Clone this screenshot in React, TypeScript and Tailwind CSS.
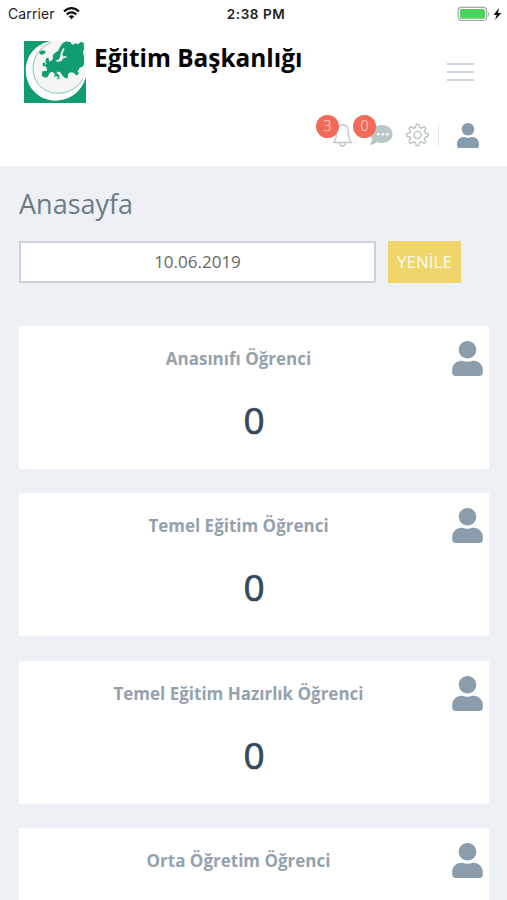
import React from 'react';
import { FaUser } from 'react-icons/fa';
import { SlSettings } from 'react-icons/sl';

const cards: { label: string; value?: number }[] = [
    { label: 'Anasınıfı Öğrenci', value: 0 },
    { label: 'Temel Eğitim Öğrenci', value: 0 },
    { label: 'Temel Eğitim Hazırlık Öğrenci', value: 0 },
    { label: 'Orta Öğretim Öğrenci' },
];

// Crescent around a map of Europe
const Logo: React.FC = () => (
    <svg className="h-[62px] w-[62px] shrink-0" viewBox="0 0 185 185">
        <rect width="185" height="185" fill="#119c72" />
        <path d="M80 0C34 9 5 45 5 88C6 140 46 178 94 178C139 178 173 149 185 107V0Z" fill="#fff" />
        <path d="M88 0C48 13 27 46 27 82C27 126 60 156 101 156C143 156 172 132 185 94V0Z" fill="#f4f5f4" />
        <path d="M80 5C46 18 27 48 27 82C27 126 60 156 101 156C135 156 163 138 176 112" fill="none" stroke="#4dab8b" strokeWidth="2" />
        <g fill="#119c72">
            <path d="M46 32l6-4 9 0 4 5-5 6-8 2-6-4z" />
            <path d="M86 56l0-14 8-8 8-5 6-12 7-10 12-6 12 3 5 8 10-5 7 3 8-7 9 2 1 18-3 12 3 12 0 22-4 8-8 2-7 11 4 8-8 5-8-8-10-2-7 6 0 10-5 3-10-7-7-11-8-3-4 4 9 9-1 8-10-9-6-8-8-3-6 6-5 10-10 1-7-6 2-13 14-1-2-10-6-6 12-4 7-10 8-5 4-7z" />
            <path d="M66 52l6-3 3 9 5 10-4 6-12 1 3-8-3-6z" />
            <path d="M56 66l7-2 1 9-8 3z" />
            <path d="M90 100l3-1 2 8-4 1zM96 111l9 0-3 4z" />
        </g>
        <path d="M110 34l7-13 4 2-6 15 1 8 11-1-1 4-10 3-4 8-12 3-6-5 9-2 5-8z" fill="#f4f5f4" />
    </svg>
);

const WifiIcon: React.FC = () => (
    <svg className="ml-[8px] h-[13px] w-[17px]" viewBox="0 0 17 13">
        <g fill="none" stroke="#111" strokeWidth="2.200">
            <path d="M1 4.400Q8.500-2.200 16 4.400" />
            <path d="M3.700 7.400Q8.500 3.200 13.300 7.400" />
        </g>
        <path d="M5.700 9.300Q8.500 7 11.300 9.300L8.500 12.300Z" fill="#111" />
    </svg>
);

const StatusBar: React.FC = () => (
    <div className="grid h-[27px] grid-cols-3 items-center font-['Inter'] text-[13.5px] text-[#222]">
        <div className="flex items-center pl-2 text-[14px]">
            <span className="tracking-[0.1px]">Carrier</span>
            <WifiIcon />
        </div>
        <div className="pl-[5px] pt-px text-center font-semibold tracking-[0.55px]">2:38 PM</div>
        <svg className="mr-[4px] h-4 w-[46px] justify-self-end" viewBox="0 0 46 16">
            <rect x="1.200" y="1.300" width="28.500" height="13.200" rx="3.500" fill="#fff" stroke="#a8a8a8" strokeWidth="1.200" />
            <rect x="3" y="3" width="25" height="9.800" rx="1.500" fill="#4cd25f" />
            <path d="M31 5.500Q33.500 8 31 10.500Z" fill="#a8a8a8" />
            <path d="M42 2L36.500 9h3.200L38 14 44.500 7h-3.500z" fill="#111" />
        </svg>
    </div>
);

const Badge: React.FC<{ count: number }> = ({ count }) => (
    <span className="absolute -left-4 -top-[8px] flex h-[23px] w-[23px] items-center justify-center rounded-full bg-[#f36a5a] text-[14px] text-white/80">
        <span className="-mt-[2px] font-light">{count}</span>
    </span>
);

const Header: React.FC = () => (
    <header className="h-[139px] bg-white">
        <div className="flex pl-6 pr-[33px] pt-[14px]">
            <Logo />
            <h1 className="ml-[8px] grow text-[24.4px] font-bold leading-[34px] text-[#050505]">Eğitim Başkanlığı</h1>
            <div className="mt-[22px] flex h-[18px] w-[27px] flex-col justify-between">
                <span className="h-[2px] bg-[#ccd5dd]" />
                <span className="h-[2px] bg-[#ccd5dd]" />
                <span className="h-[2px] bg-[#ccd5dd]" />
            </div>
        </div>
        <div className="mt-[20px] flex h-6 items-center justify-end pr-[28px]">
            <div className="relative mr-4">
                <svg className="h-6 w-[21px]" viewBox="0 0 21 24" fill="none" stroke="#bfc8ca" strokeWidth="1.400" strokeLinejoin="round">
                    <path d="M1.500 19.500C4 17.500 4.400 14.500 4.600 9.500C4.800 4 7 1.700 10.500 1.700S16.200 4 16.400 9.500C16.600 14.500 17 17.500 19.500 19.500Z" />
                    <path d="M7.700 20C7.700 24 13.300 24 13.300 20" />
                </svg>
                <Badge count={3} />
            </div>
            <div className="relative mr-[13px]">
                <svg className="h-6 w-6" viewBox="0 0 24 24">
                    <path d="M12.500 2C19 2 23.500 6 23.500 11S19 20 12.500 20C10.500 20 9 19.600 7.500 19C5.500 21 3 21.800 0.500 21.800C2 20 3 18 3 15.500C1.800 14 1 12.500 1 11C1 6 6 2 12.500 2Z" fill="#bcc5c8" />
                    <g fill="#fff">
                        <circle cx="9.500" cy="11.300" r="1.300" />
                        <circle cx="13.900" cy="11.300" r="1.300" />
                        <circle cx="18.300" cy="11.300" r="1.300" />
                    </g>
                </svg>
                <Badge count={0} />
            </div>
            <SlSettings className="h-6 w-[23px] text-[#bcc5c8]" />
            <div className="ml-[9px] mr-[18px] h-[22px] w-px bg-[#e3e7ea]" />
            <FaUser className="h-[25px] w-[22px] text-[#869dae]" />
        </div>
    </header>
);

const StatCard: React.FC<{ label: string; value?: number }> = ({ label, value }) => (
    <div className="h-[143px] shrink-0 rounded-[1px] bg-white">
        <div className="flex pr-[6px] pt-[15px]">
            <div className="grow pl-[6px] pt-[6px] text-center text-[17px] font-bold leading-6 text-[#95a2ae]">{label}</div>
            <FaUser className="h-[35px] w-[31px] shrink-0 text-[#8b9dab]" />
        </div>
        {value !== undefined && (
            <div className="mt-[24px] text-center text-[37px] leading-[40px] text-[#34495e] [-webkit-text-stroke:0.7px_#34495e]">{value}</div>
        )}
    </div>
);

const App: React.FC = () => {
    return (
        <div className="h-[900px] w-full overflow-hidden bg-[#edf1f6] font-['Open_Sans',sans-serif]">
            <div className="bg-white">
                <StatusBar />
            </div>
            <Header />
            <main className="pl-[19px] pr-[18px]">
                <h2 className="pt-[20px] text-[27px] leading-9 text-[#6c7c85]">Anasayfa</h2>
                <div className="mt-[19px] flex gap-3">
                    <div className="flex h-[42px] w-[357px] items-center justify-center rounded-[1px] border-2 border-[#cdd1dc] bg-white text-[17px] text-[#666]">
                        10.06.2019
                    </div>
                    <button className="h-[42px] w-[73px] bg-[#efd56b] text-[17px] text-white/90">YENİLE</button>
                </div>
                <div className="mt-[43px] flex flex-col gap-[24.4px]">
                    {cards.map((card) => (
                        <StatCard key={card.label} label={card.label} value={card.value} />
                    ))}
                </div>
            </main>
        </div>
    );
};

export default App;
